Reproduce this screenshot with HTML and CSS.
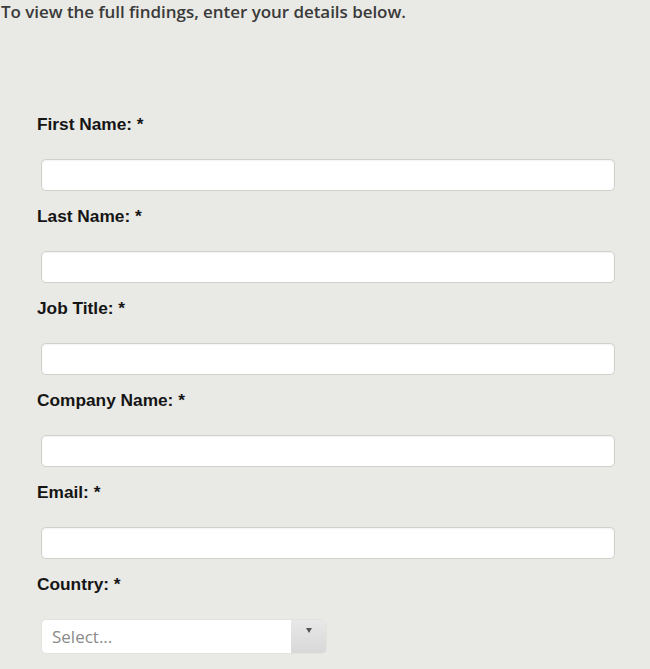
FILE: index.html
```html
<!DOCTYPE html>
<html>
<head>
<meta charset="utf-8">
<link rel="stylesheet" href="styles.css">
</head>
<body>
<p class="intro">To view the full findings, enter your details below.</p>
<form class="form">
  <div class="field">
    <label class="label">First Name: *</label>
    <input class="input" type="text">
  </div>
  <div class="field">
    <label class="label">Last Name: *</label>
    <input class="input" type="text">
  </div>
  <div class="field">
    <label class="label">Job Title: *</label>
    <input class="input" type="text">
  </div>
  <div class="field">
    <label class="label">Company Name: *</label>
    <input class="input" type="text">
  </div>
  <div class="field">
    <label class="label">Email: *</label>
    <input class="input" type="text">
  </div>
  <div class="field">
    <label class="label">Country: *</label>
    <div class="select">
      <span class="select-text">Select...</span>
      <span class="select-arrow"><span class="caret"></span></span>
    </div>
  </div>
</form>
</body>
</html>
```

FILE: styles.css
```css
html, body {
  margin: 0;
  padding: 0;
  background: #e9e9e5;
}
body {
  width: 650px;
  height: 669px;
  overflow: hidden;
}
.intro {
  margin: 0;
  padding: 1px 0 0 1px;
  font-family: "Open Sans", sans-serif;
  font-weight: 600;
  font-size: 17px;
  line-height: 22px;
  color: #3a3a3a;
  letter-spacing: -0.05px;
}
.form {
  display: flex;
  flex-direction: column;
  padding: 91px 0 0 37px;
}
.field {
  display: flex;
  flex-direction: column;
  height: 92px;
}
.label {
  font-family: "Liberation Sans", Arial, sans-serif;
  font-weight: bold;
  font-size: 17.3px;
  line-height: 20px;
  color: #151515;
}
.input {
  margin: 25px 0 0 4px;
  width: 574px;
  height: 32px;
  box-sizing: border-box;
  border: 1px solid #cfcfcc;
  border-radius: 5px;
  background: #fff;
  box-shadow: inset 0 1px 2px rgba(0,0,0,0.05);
}
.select {
  margin: 25px 0 0 4px;
  width: 286px;
  height: 35px;
  box-sizing: border-box;
  border: 1px solid #e2e2df;
  border-radius: 5px;
  background: #fff;
  display: flex;
  overflow: hidden;
}
.select-text {
  flex: 1;
  padding-left: 10px;
  font-family: "Open Sans", sans-serif;
  font-size: 17px;
  line-height: 33px;
  color: #8a8a8a;
}
.select-arrow {
  width: 35px;
  background: linear-gradient(#e8e8e8, #d8d8d8);
  display: flex;
  justify-content: center;
  padding-top: 8px;
  box-sizing: border-box;
}
.caret {
  width: 0;
  height: 0;
  border-left: 3px solid transparent;
  border-right: 3px solid transparent;
  border-top: 5px solid #555;
}
```
